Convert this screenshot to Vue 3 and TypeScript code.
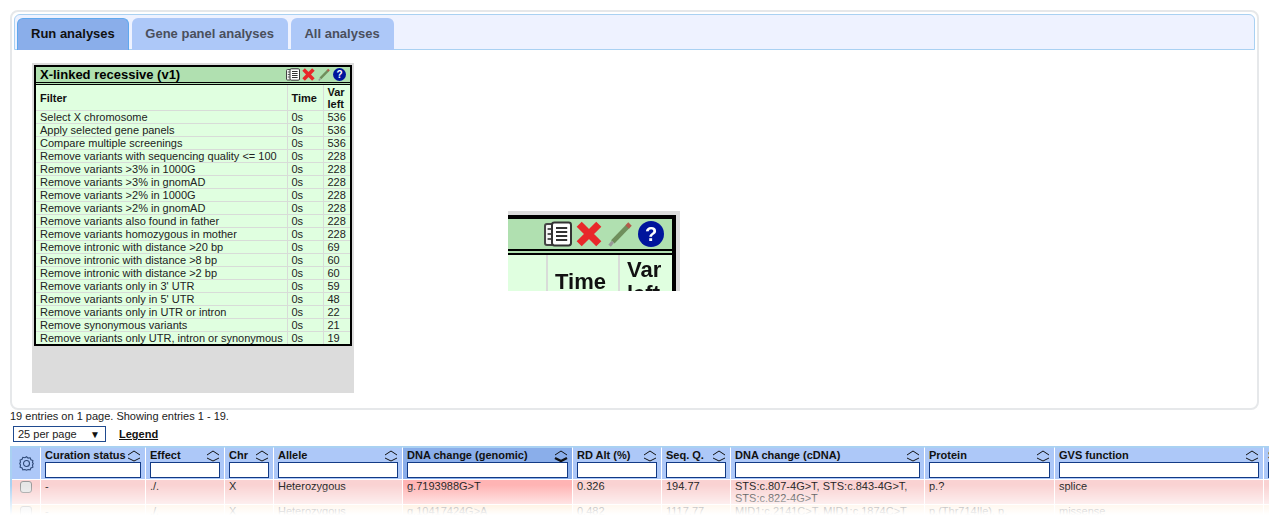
<script setup lang="ts">
interface FilterStep {
  name: string;
  time: string;
  left: number;
}

interface Column {
  label: string;
  width: number;
  sorted?: boolean;
}

const tabs = ["Run analyses", "Gene panel analyses", "All analyses"];

const steps: FilterStep[] = [
  { name: "Select X chromosome", time: "0s", left: 536 },
  { name: "Apply selected gene panels", time: "0s", left: 536 },
  { name: "Compare multiple screenings", time: "0s", left: 536 },
  { name: "Remove variants with sequencing quality <= 100", time: "0s", left: 228 },
  { name: "Remove variants >3% in 1000G", time: "0s", left: 228 },
  { name: "Remove variants >3% in gnomAD", time: "0s", left: 228 },
  { name: "Remove variants >2% in 1000G", time: "0s", left: 228 },
  { name: "Remove variants >2% in gnomAD", time: "0s", left: 228 },
  { name: "Remove variants also found in father", time: "0s", left: 228 },
  { name: "Remove variants homozygous in mother", time: "0s", left: 228 },
  { name: "Remove intronic with distance >20 bp", time: "0s", left: 69 },
  { name: "Remove intronic with distance >8 bp", time: "0s", left: 60 },
  { name: "Remove intronic with distance >2 bp", time: "0s", left: 60 },
  { name: "Remove variants only in 3' UTR", time: "0s", left: 59 },
  { name: "Remove variants only in 5' UTR", time: "0s", left: 48 },
  { name: "Remove variants only in UTR or intron", time: "0s", left: 22 },
  { name: "Remove synonymous variants", time: "0s", left: 21 },
  { name: "Remove variants only UTR, intron or synonymous", time: "0s", left: 19 },
];

const columns: Column[] = [
  { label: "Curation status", width: 105 },
  { label: "Effect", width: 79 },
  { label: "Chr", width: 49 },
  { label: "Allele", width: 129 },
  { label: "DNA change (genomic)", width: 170, sorted: true },
  { label: "RD Alt (%)", width: 89 },
  { label: "Seq. Q.", width: 69 },
  { label: "DNA change (cDNA)", width: 194 },
  { label: "Protein", width: 130 },
  { label: "GVS function", width: 209 },
  { label: "SIFT", width: 80 },
];

const rows: { tone: string; cells: string[] }[] = [
  {
    tone: "row--red",
    cells: [
      "-",
      "./.",
      "X",
      "Heterozygous",
      "g.7193988G>T",
      "0.326",
      "194.77",
      "STS:c.807-4G>T, STS:c.843-4G>T, STS:c.822-4G>T",
      "p.?",
      "splice",
      "",
    ],
  },
  {
    tone: "row--peach",
    cells: [
      "-",
      "./.",
      "X",
      "Heterozygous",
      "g.10417424G>A",
      "0.482",
      "1117.77",
      "MID1:c.2141C>T, MID1:c.1874C>T",
      "p.(Thr714Ile), p.",
      "missense",
      "",
    ],
  },
];
</script>

<template>
  <div class="page">
    <section class="panel">
      <nav class="tabbar">
        <span
          v-for="(tab, i) in tabs"
          :key="tab"
          class="tab"
          :class="{ 'tab--active': i === 0 }"
        >{{ tab }}</span>
      </nav>

      <div class="panel__body">
        <div class="card-shadow">
          <div class="card">
            <div class="card__title">
              <span>X-linked recessive (v1)</span>
              <span class="card__icons">
                <svg class="icon-doc" width="14" height="13" viewBox="0 0 14 13">
                  <path d="M4 1.5 L1.5 1.5 Q.5 1.5 .5 2.5 L.5 11 Q.5 12 1.5 12 L4 12" fill="#f4f4f4" stroke="#444" stroke-width="1" />
                  <path d="M1.8 4h2M1.8 6.5h2M1.8 9h2" stroke="#555" stroke-width="1" />
                  <rect x="4" y=".8" width="9.5" height="11.4" rx="1.2" fill="#fff" stroke="#333" stroke-width="1" />
                  <path d="M6 3.5h5.6M6 5.5h5.6M6 7.5h5.6M6 9.5h5.6" stroke="#333" stroke-width="1" />
                </svg>
                <svg class="icon-x" width="13" height="13" viewBox="0 0 13 13">
                  <path d="M1.6 1.6 L11.4 11.4 M11.4 1.6 L1.6 11.4" stroke="#e8282a" stroke-width="3.6" />
                </svg>
                <svg class="icon-pen" width="13" height="13" viewBox="0 0 13 13">
                  <path d="M2.4 10.4 L10 2.6" stroke="#6f8f5c" stroke-width="2.4" />
                  <path d="M9.6 3 L11 1.5" stroke="#b55a4a" stroke-width="2.4" />
                  <path d="M.8 12.4 L2.4 10.4" stroke="#999" stroke-width="1.6" />
                </svg>
                <svg width="13" height="13" viewBox="0 0 13 13">
                  <circle cx="6.5" cy="6.5" r="6.5" fill="#00149c" />
                  <text x="6.5" y="10" text-anchor="middle" class="help-mark">?</text>
                </svg>
              </span>
            </div>
            <table class="steps">
              <colgroup>
                <col class="steps__name" />
                <col class="steps__time" />
                <col class="steps__left" />
              </colgroup>
              <thead>
                <tr>
                  <th>Filter</th>
                  <th>Time</th>
                  <th>Var left</th>
                </tr>
              </thead>
              <tbody>
                <tr v-for="step in steps" :key="step.name">
                  <td>{{ step.name }}</td>
                  <td>{{ step.time }}</td>
                  <td>{{ step.left }}</td>
                </tr>
              </tbody>
            </table>
          </div>
        </div>
      </div>
    </section>

    <!-- magnified copy of the card corner -->
    <div class="lens" aria-hidden="true">
      <div class="lens__inner">
        <div class="card-shadow card-shadow--lens">
          <div class="card">
            <div class="card__title">
              <span></span>
              <span class="card__icons">
                <svg class="icon-doc" width="14" height="13" viewBox="0 0 14 13">
                  <path d="M4 1.5 L1.5 1.5 Q.5 1.5 .5 2.5 L.5 11 Q.5 12 1.5 12 L4 12" fill="#f4f4f4" stroke="#444" stroke-width="1" />
                  <path d="M1.8 4h2M1.8 6.5h2M1.8 9h2" stroke="#555" stroke-width="1" />
                  <rect x="4" y=".8" width="9.5" height="11.4" rx="1.2" fill="#fff" stroke="#333" stroke-width="1" />
                  <path d="M6 3.5h5.6M6 5.5h5.6M6 7.5h5.6M6 9.5h5.6" stroke="#333" stroke-width="1" />
                </svg>
                <svg class="icon-x" width="13" height="13" viewBox="0 0 13 13">
                  <path d="M1.6 1.6 L11.4 11.4 M11.4 1.6 L1.6 11.4" stroke="#e8282a" stroke-width="3.6" />
                </svg>
                <svg class="icon-pen" width="13" height="13" viewBox="0 0 13 13">
                  <path d="M2.4 10.4 L10 2.6" stroke="#6f8f5c" stroke-width="2.4" />
                  <path d="M9.6 3 L11 1.5" stroke="#b55a4a" stroke-width="2.4" />
                  <path d="M.8 12.4 L2.4 10.4" stroke="#999" stroke-width="1.6" />
                </svg>
                <svg width="13" height="13" viewBox="0 0 13 13">
                  <circle cx="6.5" cy="6.5" r="6.5" fill="#00149c" />
                  <text x="6.5" y="10" text-anchor="middle" class="help-mark">?</text>
                </svg>
              </span>
            </div>
            <table class="steps">
              <colgroup>
                <col class="steps__name" />
                <col class="steps__time" />
                <col class="steps__left" />
              </colgroup>
              <thead>
                <tr>
                  <th></th>
                  <th>Time</th>
                  <th>Var left</th>
                </tr>
              </thead>
            </table>
          </div>
        </div>
      </div>
    </div>

    <p class="summary">19 entries on 1 page. Showing entries 1 - 19.</p>

    <div class="controls">
      <div class="per-page">
        <span>25 per page</span>
        <span class="per-page__arrow">▼</span>
      </div>
      <a class="legend">Legend</a>
    </div>

    <div class="variants-wrap">
      <table class="variants">
        <colgroup>
          <col class="variants__check" />
          <col v-for="c in columns" :key="c.label" :style="{ width: c.width + 'px' }" />
        </colgroup>
        <thead>
          <tr>
            <th class="gear">
              <svg width="15" height="15" viewBox="0 0 16 16" fill="none" stroke="#2f4a78" stroke-width="1.2">
                <path d="M8 .8l1.7 1.5 2.2-.4.8 2.1 2.1.8-.4 2.2L15.2 8l-.8 1.7.4 2.2-2.1.8-.8 2.1-2.2-.4L8 15.2l-1.7-.8-2.2.4-.8-2.1-2.1-.8.4-2.2L.8 8l.8-1.5-.4-2.2 2.1-.8.8-2.1 2.2.4z" />
                <circle cx="8" cy="8" r="3.2" />
              </svg>
            </th>
            <th v-for="c in columns" :key="c.label" :class="{ sorted: c.sorted }">
              <div class="head">
                <span class="head__label">{{ c.label }}</span>
                <svg class="head__sort" width="14" height="12" viewBox="0 0 14 12" fill="none" stroke="#111" :stroke-width="1">
                  <path d="M1 5 L7 1 L13 5" />
                  <path d="M1 8 L7 11 L13 8" :stroke-width="c.sorted ? 2.4 : 1" />
                </svg>
              </div>
              <div class="head__filter"></div>
            </th>
          </tr>
        </thead>
        <tbody>
          <tr v-for="row in rows" :key="row.cells[4]" :class="row.tone">
            <td class="check"><span class="box"></span></td>
            <td
              v-for="(cell, i) in row.cells"
              :key="i"
              :class="{ 'cell--sorted': columns[i].sorted }"
            >{{ cell }}</td>
          </tr>
        </tbody>
      </table>
      <div class="fade"></div>
    </div>
  </div>
</template>

<style>
html,
body {
  margin: 0;
  height: 522px;
  overflow: hidden;
  background: #fff;
}
</style>

<style scoped>
.page {
  position: relative;
  width: 1269px;
  height: 522px;
  overflow: hidden;
  padding: 10px 0 0 10px;
  box-sizing: border-box;
  font-family: "Liberation Sans", Arial, sans-serif;
  font-size: 11px;
  color: #222;
}

.panel {
  width: 1249px;
  height: 400px;
  box-sizing: border-box;
  border: 2px solid #e6e8ea;
  border-radius: 8px;
  padding: 2px;
}

.tabbar {
  display: flex;
  gap: 3px;
  height: 36px;
  box-sizing: border-box;
  padding: 3px 0 0 2px;
  background: #eef2ff;
  border: 1px solid #a9d1f2;
  border-radius: 6px 6px 0 0;
}

.tab {
  padding: 0 14px 0 13.5px;
  height: 32px;
  line-height: 31px;
  font-size: 13px;
  font-weight: bold;
  color: #4a4f5c;
  background: #adc8f8;
  border-radius: 6px 6px 0 0;
}

.tab--active {
  padding: 0 13px;
  color: #111;
  background: #8aaeea;
  border: 1px solid #5fa8ee;
  border-bottom: 0;
  height: 31px;
  line-height: 29px;
}

.panel__body {
  padding: 13px 0 0 18px;
}

.card-shadow {
  width: 322px;
  height: 330px;
  box-sizing: border-box;
  padding: 2px;
  background: #dcdcdc;
}

.card {
  width: 318px;
  box-sizing: border-box;
  border: 2px solid #000;
  background: #e0ffe0;
}

.card__title {
  display: flex;
  justify-content: space-between;
  align-items: center;
  height: 15px;
  padding: 0 4px;
  background: #b0e0b0;
  border-bottom: 3px double #000;
  font-size: 13px;
  font-weight: bold;
  color: #000;
}

.card__icons {
  display: flex;
  align-items: center;
}

.icon-doc {
  margin-right: 1.5px;
}

.icon-x {
  margin-right: 3px;
}

.icon-pen {
  margin-right: 2.5px;
}

.help-mark {
  font-family: "Liberation Sans", Arial, sans-serif;
  font-size: 10px;
  font-weight: bold;
  fill: #fff;
}

.steps {
  width: 314px;
  table-layout: fixed;
  border-collapse: collapse;
  color: #222;
}

.steps__name {
  width: 251px;
}

.steps__time {
  width: 36px;
}

.steps th,
.steps td {
  padding: 0 4px;
  text-align: left;
  border-left: 1px solid #d8dcd8;
  line-height: 12px;
  white-space: nowrap;
}

.steps th:first-child,
.steps td:first-child {
  border-left: 0;
}

.steps th {
  height: 25px;
  font-weight: bold;
  color: #111;
  white-space: normal;
}

.steps td {
  height: 12px;
  border-top: 1px solid #d8dcd8;
}

.lens {
  position: absolute;
  left: 508px;
  top: 211px;
  width: 172px;
  height: 80px;
  overflow: hidden;
}

.lens__inner {
  position: absolute;
  left: -472px;
  top: 0;
  transform: scale(2);
  transform-origin: 0 0;
  filter: blur(0.3px);
}

.card-shadow--lens {
  height: 60px;
}

.summary {
  margin: 0;
  height: 16px;
  line-height: 13px;
  padding-top: 0;
}

.controls {
  display: flex;
  align-items: center;
  gap: 13px;
  margin: 0 0 4px 3px;
  height: 16px;
}

.per-page {
  display: flex;
  justify-content: space-between;
  align-items: center;
  width: 93px;
  height: 16px;
  box-sizing: border-box;
  padding: 0 5px 0 4px;
  border: 1px solid #1f4a8f;
}

.per-page__arrow {
  font-size: 10px;
  color: #111;
}

.legend {
  font-weight: bold;
  color: #111;
  text-decoration: underline;
}

.variants {
  width: 1314px;
  table-layout: fixed;
  border-collapse: separate;
  border-spacing: 0;
  border: 1px solid #a9d1f2;
  border-left-width: 2px;
  border-bottom: 0;
}

.variants__check {
  width: 28px;
}

.variants th {
  height: 32px;
  box-sizing: border-box;
  padding: 1px 4px 0;
  vertical-align: top;
  text-align: left;
  background: #adc8f8;
  border-top: 1px solid #a9d1f2;
  border-left: 1px solid #fff;
  color: #111;
}

.variants th:first-child {
  border-left: 0;
}

.variants th.sorted {
  background: #8aaeea;
}

.variants th.gear {
  padding: 0 0 1px;
  vertical-align: middle;
  text-align: center;
}

.gear svg {
  display: block;
  margin: 0 auto;
}

.head {
  display: flex;
  justify-content: space-between;
  height: 13px;
  line-height: 13px;
  white-space: nowrap;
}

.head__sort {
  flex: none;
  margin: 1px 0 0 0;
}

.head__filter {
  height: 16px;
  box-sizing: border-box;
  border: 1px solid #123a85;
  background: #fff;
}

.variants td {
  height: 25px;
  box-sizing: border-box;
  padding: 0 4px;
  vertical-align: top;
  line-height: 12px;
  border-left: 1px solid #fff;
  border-top: 1px solid #fff;
  overflow: hidden;
}

.variants td:first-child {
  border-left: 0;
}

.row--red td {
  background: #fad2d2;
}

.row--red td.cell--sorted {
  background: #ffb4b4;
}

.row--peach td {
  background: #ffe9cf;
}

.row--peach td.cell--sorted {
  background: #ffdcb0;
}

.check {
  text-align: center;
}

.box {
  display: block;
  width: 12px;
  height: 12px;
  margin: 1px auto 0;
  box-sizing: border-box;
  background: #e6e6e6;
  border: 1px solid #9a9a9a;
  border-radius: 3px;
}

.fade {
  position: absolute;
  left: 0;
  right: 0;
  bottom: 0;
  height: 37px;
  background: linear-gradient(to bottom, rgba(255, 255, 255, 0) 0, rgba(255, 255, 255, 1) 30px);
}
</style>
